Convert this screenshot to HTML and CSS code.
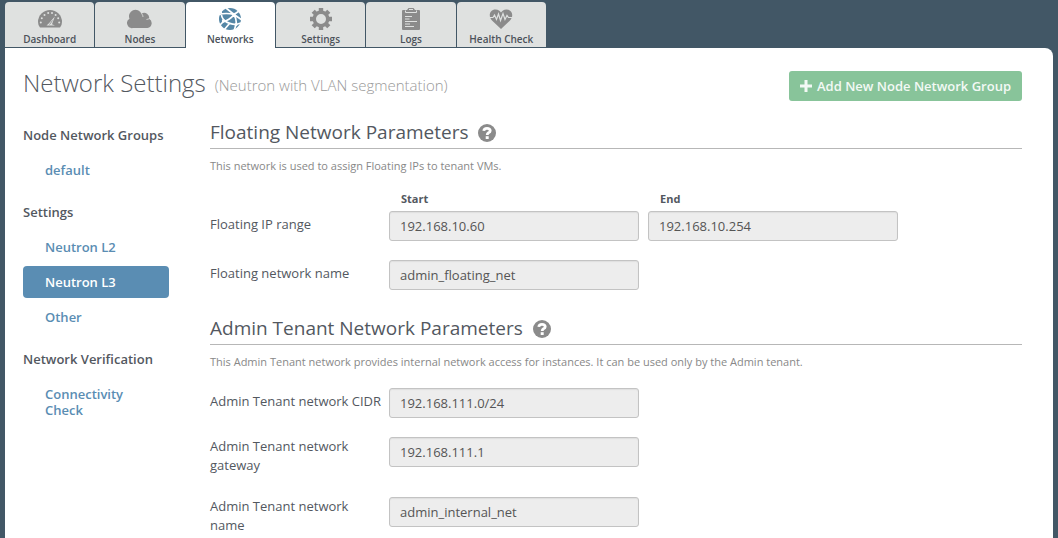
FILE: index.html
```html
<!DOCTYPE html>
<html lang="en">
<head>
<meta charset="utf-8">
<title>Network Settings</title>
<link rel="stylesheet" href="styles.css">
</head>
<body>
<nav class="tabs" aria-label="Cluster">
  <a class="tab" href="#dashboard">
    <svg class="tab-icon" viewBox="0 0 26 24" aria-hidden="true">
      <path fill="currentColor" d="M3 19.500Q1 17.500 1 14A12 12 0 0 1 25 14Q25 17.500 23 19.500Z"/>
      <g fill="#dfe1e0"><circle cx="3.800" cy="14.500" r="1"/><circle cx="4.800" cy="10.200" r="1"/><circle cx="7.500" cy="7" r="1"/><circle cx="11.200" cy="5" r="1"/><circle cx="15" cy="5" r="1"/><circle cx="18.600" cy="7" r="1"/><circle cx="21.200" cy="10.200" r="1"/><circle cx="22.200" cy="14.500" r="1"/><path d="M17.800 8.500 15 16.200 18 17.400H9.500L12 15.200Z"/></g>
      <path stroke="currentColor" stroke-width=".8" d="M12.500 16.600 15.500 12.500"/>
    </svg>
    <span>Dashboard</span>
  </a>
  <a class="tab" href="#nodes">
    <svg class="tab-icon" viewBox="0 0 26 24" aria-hidden="true"><path fill="currentColor" d="M6 20A5 5 0 0 1 2.500 10.800 6.300 6.300 0 0 1 14.500 5.800 4.800 4.800 0 0 1 22 10.800 4.900 4.900 0 0 1 20.500 20Z"/><path fill="none" stroke="#dfe1e0" stroke-width=".8" d="M14.500 5.500Q16 7 16 9M22 10.800 19.500 11.500"/></svg>
    <span>Nodes</span>
  </a>
  <a class="tab tab-active" href="#networks" aria-current="page">
    <svg class="tab-icon" viewBox="0 0 26 24" aria-hidden="true"><circle cx="13" cy="11" r="11" fill="currentColor"/><g fill="none" stroke="#fff" stroke-width="1.700"><path d="M9 0 17 6.500 25 12M2 6.500Q9 4.500 17 6.500L22 3M17 6.500Q13 12 6.500 13.500L2 18M4 3Q4 10 8 13 12 16 19 16.500L24 15M17 6.500Q20 12 19 16.500L17 23M12.500 15.500 7 22"/></g><g fill="#fff"><circle cx="17" cy="6.500" r="1.700"/><circle cx="6.500" cy="13" r="1.700"/><circle cx="19" cy="16.500" r="1.600"/></g></svg>
    <span>Networks</span>
  </a>
  <a class="tab" href="#settings">
    <svg class="tab-icon" viewBox="0 0 26 24" aria-hidden="true"><g fill="none" stroke="currentColor"><circle cx="13" cy="11" r="6.700" stroke-width="3.400"/><g stroke-width="4.400"><path d="M13 0V4M13 18V22M2 11H6M20 11H24"/><path d="M5.200 3.200 8 6M18 16 20.800 18.800M5.200 18.800 8 16M18 6 20.800 3.200"/></g></g></svg>
    <span>Settings</span>
  </a>
  <a class="tab" href="#logs">
    <svg class="tab-icon" viewBox="0 0 26 24" aria-hidden="true"><path fill="currentColor" d="M5 2H9L10.500 0H15.500L17 2H21A1 1 0 0 1 22 3V21A1 1 0 0 1 21 22H5A1 1 0 0 1 4 21V3A1 1 0 0 1 5 2Z"/><path fill="none" stroke="#dfe1e0" d="M7.500 2.500V4.500H18.500V2.500M11 1.500H15M7 8.500H14M7 11H11.500M7 13.500H19M7 16H12M7 18.500H16"/></svg>
    <span>Logs</span>
  </a>
  <a class="tab" href="#health">
    <svg class="tab-icon" viewBox="0 0 26 24" aria-hidden="true"><path fill="currentColor" d="M13 21 4 12.500C0 8 1.500 1.500 7.500 1.500 10.500 1.500 12 3 13 4.500 14 3 15.500 1.500 18.500 1.500 24.500 1.500 26 8 22 12.500Z"/><path fill="none" stroke="#dfe1e0" stroke-width="1.200" d="M1 9.500H5L6.500 7 8.500 11.500 10.500 6 12.500 12.500 15 5.500 17 11.500 19 7.500 20.500 9.500H25"/></svg>
    <span>Health Check</span>
  </a>
</nav>
<main class="panel">
  <header class="page-head">
    <h1 class="page-title">Network Settings</h1>
    <span class="page-note">(Neutron with VLAN segmentation)</span>
    <button class="add-button" type="button">
      <svg class="plus" viewBox="0 0 12 12" aria-hidden="true"><path stroke="currentColor" stroke-width="3" d="M6 0V12M0 6H12"/></svg>
      Add New Node Network Group
    </button>
  </header>
  <div class="columns">
    <nav class="sidebar" aria-label="Network sections">
      <h2 class="side-title">Node Network Groups</h2>
      <a class="side-link" href="#default">default</a>
      <h2 class="side-title">Settings</h2>
      <a class="side-link" href="#l2">Neutron L2</a>
      <a class="side-link side-link-active" href="#l3" aria-current="true">Neutron L3</a>
      <a class="side-link" href="#other">Other</a>
      <h2 class="side-title">Network Verification</h2>
      <a class="side-link" href="#check">Connectivity Check</a>
    </nav>
    <form class="content">
      <section class="group">
        <h2 class="group-title">Floating Network Parameters
          <svg class="help" viewBox="0 0 18 18" aria-hidden="true"><circle cx="9" cy="9" r="9" fill="currentColor"/><path fill="none" stroke="#fff" stroke-width="2.800" d="M5.800 6.800Q6 4.300 9 4.300T12.200 6.700Q12.200 8 10.500 8.800 9.200 9.500 9.200 11"/><path fill="#fff" d="M7.700 12.200H10.700V15H7.700Z"/></svg>
        </h2>
        <p class="group-note">This network is used to assign Floating IPs to tenant VMs.</p>
        <div class="row range-head">
          <span></span>
          <label class="range-label" for="start">Start</label>
          <label class="range-label" for="end">End</label>
        </div>
        <div class="row">
          <label class="label" for="start">Floating IP range</label>
          <input class="field" id="start" value="192.168.10.60">
          <input class="field" id="end" value="192.168.10.254">
        </div>
        <div class="row">
          <label class="label" for="fname">Floating network name</label>
          <input class="field" id="fname" value="admin_floating_net">
        </div>
      </section>
      <section class="group">
        <h2 class="group-title">Admin Tenant Network Parameters
          <svg class="help" viewBox="0 0 18 18" aria-hidden="true"><circle cx="9" cy="9" r="9" fill="currentColor"/><path fill="none" stroke="#fff" stroke-width="2.800" d="M5.800 6.800Q6 4.300 9 4.300T12.200 6.700Q12.200 8 10.500 8.800 9.200 9.500 9.200 11"/><path fill="#fff" d="M7.700 12.200H10.700V15H7.700Z"/></svg>
        </h2>
        <p class="group-note">This Admin Tenant network provides internal network access for instances. It can be used only by the Admin tenant.</p>
        <div class="row">
          <label class="label" for="cidr">Admin Tenant network CIDR</label>
          <input class="field" id="cidr" value="192.168.111.0/24">
        </div>
        <div class="row">
          <label class="label" for="gateway">Admin Tenant network gateway</label>
          <input class="field" id="gateway" value="192.168.111.1">
        </div>
        <div class="row">
          <label class="label" for="iname">Admin Tenant network name</label>
          <input class="field" id="iname" value="admin_internal_net">
        </div>
      </section>
    </form>
  </div>
</main>
</body>
</html>
```
FILE: styles.css
```css
* {
  box-sizing: border-box;
}

body {
  display: flex;
  flex-direction: column;
  min-height: 100vh;
  margin: 0;
  padding: 2px 5px 0;
  background: #425766;
  color: #53585f;
  font-family: "Open Sans", sans-serif;
  font-size: 13px;
  line-height: 19px;
}

a {
  text-decoration: none;
}

h1, h2, p {
  margin: 0;
}

.tabs {
  display: grid;
  grid-template-columns: repeat(6, 1fr);
  gap: 1px;
  width: 100%;
  max-width: 541px;
}

.tab {
  display: flex;
  flex-direction: column;
  align-items: center;
  gap: 1px;
  margin-bottom: 1px;
  padding: 6px 0 1px;
  border-radius: 4px 4px 0 0;
  background: #dfe1e0;
  color: #4c525a;
  font-size: 10px;
  font-weight: 600;
  line-height: 13px;
}

.tab-active {
  margin-bottom: 0;
  background: #fff;
}

.tab-icon {
  width: 26px;
  height: 24px;
  color: #8b8b8b;
}

.tab-active .tab-icon {
  color: #5587a6;
}

.panel {
  flex: 1;
  padding: 20px 31px 0 18px;
  border-radius: 0 8px 0 0;
  background: #fff;
}

.page-head {
  display: flex;
  align-items: flex-start;
}

.page-title {
  font-size: 24px;
  font-weight: 300;
  line-height: 30px;
}

.page-note {
  margin-left: 9px;
  padding-top: 8px;
  color: #999;
  font-size: 15px;
  font-weight: 300;
}

.add-button {
  display: flex;
  align-items: center;
  gap: 5px;
  height: 30px;
  margin: 3px 0 0 auto;
  padding: 0 11px;
  border: 0;
  border-radius: 3px;
  background: #88c49a;
  color: #f3f9f5;
  font: 600 13px "Open Sans", sans-serif;
}

.plus {
  width: 12px;
  height: 12px;
}

.columns {
  display: flex;
  gap: 41px;
  margin-top: 19px;
}

.sidebar {
  flex: none;
  width: 146px;
  padding-top: 6px;
}

.side-title {
  margin: 17px 0 9px;
  font-size: 13px;
  font-weight: 600;
}

.side-title:first-child {
  margin-top: 0;
}

.side-link {
  display: block;
  margin-bottom: 3px;
  padding: 8px 22px;
  border-radius: 4px;
  color: #5a8db3;
  font-weight: 600;
  line-height: 16px;
}

.side-link-active {
  background: #5a8db3;
  color: #fff;
}

.content {
  flex: 1;
  min-width: 0;
}

.group + .group {
  margin-top: 26px;
}

.group-title {
  display: flex;
  align-items: center;
  gap: 10px;
  padding-bottom: 4px;
  border-bottom: 1px solid #b7b7b7;
  font-size: 19px;
  font-weight: 400;
  line-height: 24px;
}

.help {
  width: 18px;
  height: 18px;
  margin-top: 2px;
  color: #8b8b8b;
}

.group-note {
  margin: 7px 0 17px;
  color: #888;
  font-size: 11px;
}

.row {
  display: grid;
  grid-template-columns: 179px 250px 250px;
  align-items: start;
  margin-bottom: 19px;
}

.row:last-child {
  margin-bottom: 0;
}

.range-head {
  margin-bottom: 5px;
}

.range-label {
  padding-left: 12px;
  font-size: 11px;
  font-weight: 700;
  line-height: 14px;
}

.label {
  align-self: center;
  padding: 0 5px 3px 0;
}

.field {
  width: 100%;
  height: 30px;
  padding: 0 10px;
  border: 1px solid #c3c3c3;
  border-radius: 3px;
  background: #ededed;
  box-shadow: inset 0 1px 1px #dedede;
  color: #555;
  font: 13px "Open Sans", sans-serif;
}

.field + .field,
.range-label + .range-label {
  margin-left: 9px;
}
```
